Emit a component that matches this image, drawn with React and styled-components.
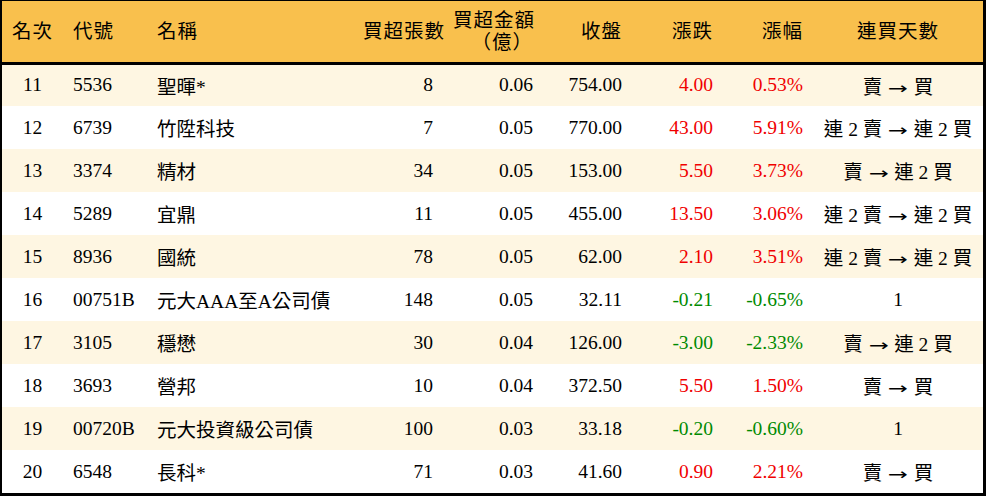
import React from "react";
import styled, { createGlobalStyle } from "styled-components";

const GlobalStyle = createGlobalStyle`
  html, body {
    margin: 0;
    padding: 0;
    background: #000;
  }
  body {
    font-family: "Liberation Serif", "Noto Sans CJK TC", serif;
  }
`;

const rows = [
  { rank: 11, code: "5536", name: "聖暉*", vol: 8, amt: "0.06", close: "754.00", chg: "4.00", pct: "0.53%", from: "賣", to: "買" },
  { rank: 12, code: "6739", name: "竹陞科技", vol: 7, amt: "0.05", close: "770.00", chg: "43.00", pct: "5.91%", from: "連 2 賣", to: "連 2 買" },
  { rank: 13, code: "3374", name: "精材", vol: 34, amt: "0.05", close: "153.00", chg: "5.50", pct: "3.73%", from: "賣", to: "連 2 買" },
  { rank: 14, code: "5289", name: "宜鼎", vol: 11, amt: "0.05", close: "455.00", chg: "13.50", pct: "3.06%", from: "連 2 賣", to: "連 2 買" },
  { rank: 15, code: "8936", name: "國統", vol: 78, amt: "0.05", close: "62.00", chg: "2.10", pct: "3.51%", from: "連 2 賣", to: "連 2 買" },
  { rank: 16, code: "00751B", name: "元大AAA至A公司債", vol: 148, amt: "0.05", close: "32.11", chg: "-0.21", pct: "-0.65%", days: "1" },
  { rank: 17, code: "3105", name: "穩懋", vol: 30, amt: "0.04", close: "126.00", chg: "-3.00", pct: "-2.33%", from: "賣", to: "連 2 買" },
  { rank: 18, code: "3693", name: "營邦", vol: 10, amt: "0.04", close: "372.50", chg: "5.50", pct: "1.50%", from: "賣", to: "買" },
  { rank: 19, code: "00720B", name: "元大投資級公司債", vol: 100, amt: "0.03", close: "33.18", chg: "-0.20", pct: "-0.60%", days: "1" },
  { rank: 20, code: "6548", name: "長科*", vol: 71, amt: "0.03", close: "41.60", chg: "0.90", pct: "2.21%", from: "賣", to: "買" },
];

const widths = [61, 84, 206, 90, 100, 89, 91, 90, 170];

const Frame = styled.div`
  width: 986px;
  height: 496px;
  box-sizing: border-box;
  padding: 1px 3px 3px 2px;
  background: #000;
`;

const Table = styled.table`
  width: 981px;
  table-layout: fixed;
  border-collapse: collapse;
  font-size: 19.5px;
  color: #000;
`;

const HeadRow = styled.tr`
  height: 62px;
  background: #f9c04d;
  border-bottom: 3px solid #000;
`;

const Th = styled.th`
  font-weight: normal;
  line-height: 22px;
  padding: 2px 10px 0;
  text-align: ${(p) => p.$align || "left"};
  vertical-align: middle;
  white-space: nowrap;
  letter-spacing: 1px;
`;

const Row = styled.tr`
  height: 43px;
  background: ${(p) => (p.$odd ? "#fef6e2" : "#ffffff")};
`;

const Td = styled.td`
  padding: 0 10px;
  text-align: ${(p) => p.$align || "left"};
  vertical-align: middle;
  white-space: nowrap;
  color: ${(p) => (p.$tone === "up" ? "#f00000" : p.$tone === "down" ? "#008a00" : "#000")};
`;

const Arrow = styled.span`
  display: inline-block;
  margin: 0 9px;
  font-family: "DejaVu Sans", sans-serif;
  font-size: 16px;
  transform: scaleX(1.5);
`;

export default function App() {
  return (
    <>
      <GlobalStyle />
      <Frame>
        <Table>
          <colgroup>
            {widths.map((w, i) => (
              <col key={i} style={{ width: w }} />
            ))}
          </colgroup>
          <thead>
            <HeadRow>
              <Th $align="center">名次</Th>
              <Th>代號</Th>
              <Th>名稱</Th>
              <Th $align="right">買超張數</Th>
              <Th $align="right">
                買超金額
                <br />
                （億）
              </Th>
              <Th $align="right">收盤</Th>
              <Th $align="right">漲跌</Th>
              <Th $align="right">漲幅</Th>
              <Th $align="center">連買天數</Th>
            </HeadRow>
          </thead>
          <tbody>
            {rows.map((r, i) => {
              const tone = r.chg.startsWith("-") ? "down" : "up";
              return (
                <Row key={r.rank} $odd={i % 2 === 0}>
                  <Td $align="center">{r.rank}</Td>
                  <Td>{r.code}</Td>
                  <Td>{r.name}</Td>
                  <Td $align="right">{r.vol}</Td>
                  <Td $align="right">{r.amt}</Td>
                  <Td $align="right">{r.close}</Td>
                  <Td $align="right" $tone={tone}>{r.chg}</Td>
                  <Td $align="right" $tone={tone}>{r.pct}</Td>
                  <Td $align="center">
                    {r.days ? (
                      r.days
                    ) : (
                      <>
                        {r.from}
                        <Arrow>→</Arrow>
                        {r.to}
                      </>
                    )}
                  </Td>
                </Row>
              );
            })}
          </tbody>
        </Table>
      </Frame>
    </>
  );
}
